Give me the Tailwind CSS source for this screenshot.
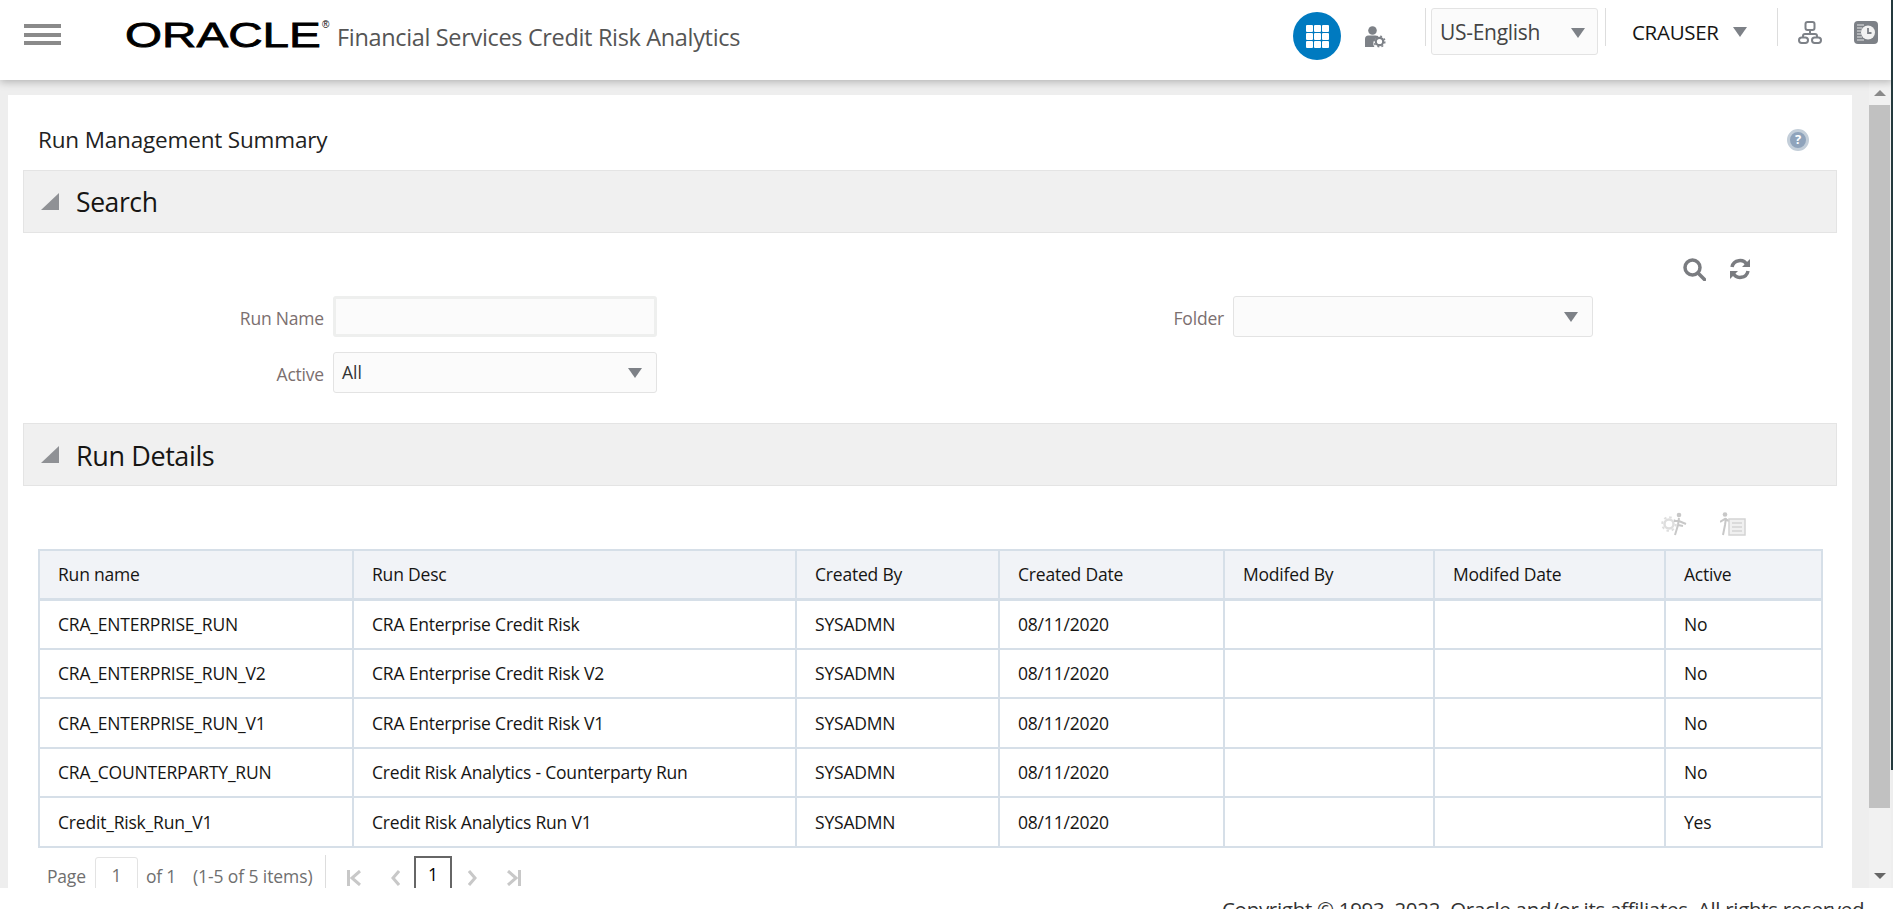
<!DOCTYPE html>
<html>
<head>
<meta charset="utf-8">
<title>Run Management Summary</title>
<script src="https://cdn.jsdelivr.net/npm/@tailwindcss/browser@4"></script>
</head>
<body class="relative h-[909px] overflow-hidden bg-white font-['Open_Sans',sans-serif] text-[#161513]">

<!-- top bar -->
<header class="relative z-10 flex h-20 items-center bg-white pb-2 pr-[2px] shadow-[0_2px_8px_rgba(0,0,0,0.25)]">
    <div class="mb-[3px] ml-6 flex w-[37px] flex-col gap-[4.500px]">
        <span class="h-1 bg-[#8a8a8a]"></span>
        <span class="h-1 bg-[#8a8a8a]"></span>
        <span class="h-1 bg-[#8a8a8a]"></span>
    </div>
    <div class="relative mb-[2px] ml-[64px] h-[30px] w-[207px]">
        <span class="inline-block origin-left scale-x-[1.36] font-['Liberation_Sans',sans-serif] text-[35px] leading-[30px] text-black [-webkit-text-stroke:0.8px_#000]">ORACLE</span>
        <span class="absolute left-[197px] top-[-1px] font-['Liberation_Sans',sans-serif] text-[10px] leading-[12px] text-black">®</span>
    </div>
    <span class="ml-[5px] mt-[4px] text-[23.500px] tracking-[-0.34px] text-[#555]">Financial Services Credit Risk Analytics</span>

    <div class="ml-auto flex h-[72px] items-center">
        <div class="flex size-12 items-center justify-center rounded-full bg-[#007ac0]">
            <div class="grid grid-cols-[repeat(3,7px)] gap-[1px]">
                <span class="size-[7px] rounded-[1px] bg-white"></span><span class="size-[7px] rounded-[1px] bg-white"></span><span class="size-[7px] rounded-[1px] bg-white"></span>
                <span class="size-[7px] rounded-[1px] bg-white"></span><span class="size-[7px] rounded-[1px] bg-white"></span><span class="size-[7px] rounded-[1px] bg-white"></span>
                <span class="size-[7px] rounded-[1px] bg-white"></span><span class="size-[7px] rounded-[1px] bg-white"></span><span class="size-[7px] rounded-[1px] bg-white"></span>
            </div>
        </div>
        <svg class="ml-[23px] mt-[2px] size-[22px]" viewBox="0 0 22 22" fill="#7d8187">
            <circle cx="8.500" cy="4.500" r="4.300"/>
            <path d="M1 21V13q0-3.500 3.500-3.500h7q3 0 3 2a6 6 0 0 0-4 9.500z"/>
            <circle cx="15.500" cy="15.500" r="3.700" fill="none" stroke="#7d8187" stroke-width="2.200"/>
            <circle cx="15.500" cy="15.500" r="5.400" fill="none" stroke="#7d8187" stroke-width="1.400" stroke-dasharray="2 2.240"/>
        </svg>
        <span class="ml-[39px] h-[38px] w-px self-start mt-2 bg-[#ddd]"></span>
        <div class="ml-[5px] mt-2 flex h-[47px] w-[167px] items-center justify-between self-start rounded-[3px] border border-[#e3e3e3] bg-[#fbfbfb] pl-[8px] pr-[12px] pt-[3px] text-[21px] tracking-[-0.3px] text-[#444]">
            US-English
            <span class="mb-[1px] size-0 border-x-[7px] border-t-[10px] border-x-transparent border-t-[#7d8187]"></span>
        </div>
        <span class="ml-[7px] h-[38px] w-px self-start mt-2 bg-[#ddd]"></span>
        <span class="mb-[8px] ml-[26px] w-[101px] text-[20.500px] tracking-[-0.3px]">CRAUSER</span>
        <span class="mb-[8px] size-0 border-x-[7px] border-t-[10px] border-x-transparent border-t-[#7d8187]"></span>
        <span class="ml-[30px] h-[38px] w-px self-start mt-2 bg-[#ddd]"></span>
        <svg class="mb-[7px] ml-[20px] h-[23px] w-[24px]" viewBox="0 0 24 23" fill="none" stroke="#7d8187" stroke-width="2">
            <rect x="7.500" y="1" width="9" height="8" rx="2"/>
            <path d="M12 9v4M5 17v-2q0-2 2-2h10q2 0 2 2v2"/>
            <rect x="1" y="16.500" width="9" height="5.500" rx="2.700"/>
            <rect x="14" y="16.500" width="9" height="5.500" rx="2.700"/>
        </svg>
        <svg class="mb-[7px] ml-[32px] h-[23px] w-[24px]" viewBox="0 0 24 23" fill="none">
            <rect x="0" y="0" width="24" height="23" rx="4" fill="#7d8187"/>
            <path d="M3 4h7M3 7h5M3 10h4M3 13h4M3 16h5M3 19h7" stroke="#e8e8e8" stroke-width="1"/>
            <circle cx="14" cy="11.500" r="7" fill="#f2f2f2"/>
            <path d="M14 7v5h3.500" stroke="#7d8187" stroke-width="1.800"/>
        </svg>
        <span class="w-[13px]"></span>
    </div>
</header>

<div class="flex h-[808px] items-start bg-[#eeeeee]">
    <!-- content panel -->
    <main class="ml-2 mt-[15px] h-[793px] w-[1844px] overflow-hidden bg-white px-[15px]">
        <div class="flex h-[75px] items-center justify-between pl-[15px] pr-[28px] pt-[14px]">
            <h1 class="text-[22.500px] tracking-[-0.17px] text-[#222]">Run Management Summary</h1>
            <span class="flex size-[22px] items-center justify-center rounded-full border-[3px] border-[#c3ced9] bg-[#8fa3bb] text-[13px] font-bold leading-none text-white">?</span>
        </div>

        <section class="flex h-[63px] items-center border border-[#e4e4e4] bg-[#f0f0f0]">
            <span class="ml-[17px] size-0 border-b-[17px] border-l-[18px] border-b-[#8f9195] border-l-transparent"></span>
            <h2 class="ml-[17px] pt-[2px] text-[26.500px] tracking-[-0.4px]">Search</h2>
        </section>

        <div class="flex h-[26px] justify-end gap-[23px] pr-[86px] pt-[25px]">
            <svg class="size-[23px] shrink-0" viewBox="0 0 23 23" fill="none" stroke="#7a7c80" stroke-width="3.500">
                <circle cx="9.500" cy="9.500" r="7.500"/>
                <path d="M15 15l6.500 6.500" stroke-linecap="round"/>
            </svg>
            <svg class="size-[22px] shrink-0" viewBox="0 0 22 22" fill="none" stroke="#7a7c80" stroke-width="3.500">
                <path d="M3 9a8 8 0 0 1 15-2"/>
                <path d="M19 13a8 8 0 0 1-15 2"/>
                <path d="M21 1v8h-8z" fill="#7a7c80" stroke="none"/>
                <path d="M1 21v-8h8z" fill="#7a7c80" stroke="none"/>
            </svg>
        </div>

        <div class="mt-[37px] grid grid-cols-[310px_324px_576px_360px] items-center gap-y-[15px] text-[17.500px]">
            <label class="pr-[9px] pt-1 text-right tracking-[-0.2px] text-[#7b6f6f]">Run Name</label>
            <input class="h-[41px] rounded-[3px] border-[3px] border-[#eeefee] bg-[#fbfbfb]">
            <label class="pr-[9px] pt-1 text-right tracking-[-0.2px] text-[#7b6f6f]">Folder</label>
            <div class="flex h-[41px] items-center justify-end rounded-[3px] border border-[#e3e3e3] bg-[#fbfbfb] pr-[14px]">
                <span class="size-0 border-x-[7px] border-t-[10px] border-x-transparent border-t-[#7d8187]"></span>
            </div>
            <label class="pr-[9px] pt-1 text-right tracking-[-0.2px] text-[#7b6f6f]">Active</label>
            <div class="flex h-[41px] items-center justify-between rounded-[3px] border border-[#e3e3e3] bg-[#fbfbfb] pl-2 pr-[14px] text-[#333]">
                All
                <span class="size-0 border-x-[7px] border-t-[10px] border-x-transparent border-t-[#7d8187]"></span>
            </div>
        </div>

        <section class="mt-[30px] flex h-[63px] items-center border border-[#e4e4e4] bg-[#f0f0f0]">
            <span class="ml-[17px] size-0 border-b-[17px] border-l-[18px] border-b-[#8f9195] border-l-transparent"></span>
            <h2 class="ml-[17px] pt-1 text-[27px] tracking-[-0.4px]">Run Details</h2>
        </section>

        <div class="flex h-[63px] items-start justify-end gap-[33px] pr-[91px] pt-[26px]">
            <svg class="h-[24px] w-[26px]" viewBox="0 0 26 24" fill="none">
                <circle cx="8" cy="12" r="4.500" stroke="#dedede" stroke-width="2.500"/>
                <circle cx="8" cy="12" r="6.800" stroke="#dedede" stroke-width="2" stroke-dasharray="2.500 2.840"/>
                <circle cx="18" cy="3" r="2.300" fill="#c8c8c8"/>
                <path d="M18 6l-1 7-3 10M13 9h5l7 3M17 13l5 1" stroke="#c8c8c8" stroke-width="2"/>
            </svg>
            <svg class="h-[24px] w-[26px]" viewBox="0 0 26 24" fill="none">
                <circle cx="5" cy="2.500" r="2.300" fill="#c8c8c8"/>
                <path d="M6 6L5 13l-2 10M0 10l5-3 4 2" stroke="#c8c8c8" stroke-width="2"/>
                <rect x="9" y="7" width="16" height="16" fill="#f0f0f0" stroke="#d4d4d4" stroke-width="1.500"/>
                <path d="M12 11h10M12 15h10M12 19h10" stroke="#d4d4d4" stroke-width="1.500"/>
            </svg>
        </div>

        <table class="ml-[15px] w-[1783px] table-fixed border-collapse border-2 border-[#d6dfe8] text-[17.500px] tracking-[-0.2px] text-[#161513]">
            <colgroup>
                <col class="w-[314px]"><col class="w-[443px]"><col class="w-[203px]"><col class="w-[225px]"><col class="w-[210px]"><col class="w-[231px]"><col class="w-[157px]">
            </colgroup>
            <thead>
                <tr class="h-[49px] bg-[#f1f3f7] text-left">
                    <th class="border-r-2 border-b-[3px] border-[#d6dfe8] pl-[18px] font-normal">Run name</th>
                    <th class="border-r-2 border-b-[3px] border-[#d6dfe8] pl-[18px] font-normal">Run Desc</th>
                    <th class="border-r-2 border-b-[3px] border-[#d6dfe8] pl-[18px] font-normal">Created By</th>
                    <th class="border-r-2 border-b-[3px] border-[#d6dfe8] pl-[18px] font-normal">Created Date</th>
                    <th class="border-r-2 border-b-[3px] border-[#d6dfe8] pl-[18px] font-normal">Modifed By</th>
                    <th class="border-r-2 border-b-[3px] border-[#d6dfe8] pl-[18px] font-normal">Modifed Date</th>
                    <th class="border-b-[3px] border-[#d6dfe8] pl-[18px] font-normal">Active</th>
                </tr>
            </thead>
            <tbody>
                <tr class="h-[49.500px] border-b-2 border-[#d6dfe8]">
                    <td class="border-r-2 border-[#d6dfe8] pl-[18px]">CRA_ENTERPRISE_RUN</td><td class="border-r-2 border-[#d6dfe8] pl-[18px]">CRA Enterprise Credit Risk</td><td class="border-r-2 border-[#d6dfe8] pl-[18px]">SYSADMN</td><td class="border-r-2 border-[#d6dfe8] pl-[18px]">08/11/2020</td><td class="border-r-2 border-[#d6dfe8]"></td><td class="border-r-2 border-[#d6dfe8]"></td><td class="pl-[18px]">No</td>
                </tr>
                <tr class="h-[49.500px] border-b-2 border-[#d6dfe8]">
                    <td class="border-r-2 border-[#d6dfe8] pl-[18px]">CRA_ENTERPRISE_RUN_V2</td><td class="border-r-2 border-[#d6dfe8] pl-[18px]">CRA Enterprise Credit Risk V2</td><td class="border-r-2 border-[#d6dfe8] pl-[18px]">SYSADMN</td><td class="border-r-2 border-[#d6dfe8] pl-[18px]">08/11/2020</td><td class="border-r-2 border-[#d6dfe8]"></td><td class="border-r-2 border-[#d6dfe8]"></td><td class="pl-[18px]">No</td>
                </tr>
                <tr class="h-[49.500px] border-b-2 border-[#d6dfe8]">
                    <td class="border-r-2 border-[#d6dfe8] pl-[18px]">CRA_ENTERPRISE_RUN_V1</td><td class="border-r-2 border-[#d6dfe8] pl-[18px]">CRA Enterprise Credit Risk V1</td><td class="border-r-2 border-[#d6dfe8] pl-[18px]">SYSADMN</td><td class="border-r-2 border-[#d6dfe8] pl-[18px]">08/11/2020</td><td class="border-r-2 border-[#d6dfe8]"></td><td class="border-r-2 border-[#d6dfe8]"></td><td class="pl-[18px]">No</td>
                </tr>
                <tr class="h-[49.500px] border-b-2 border-[#d6dfe8]">
                    <td class="border-r-2 border-[#d6dfe8] pl-[18px]">CRA_COUNTERPARTY_RUN</td><td class="border-r-2 border-[#d6dfe8] pl-[18px]">Credit Risk Analytics - Counterparty Run</td><td class="border-r-2 border-[#d6dfe8] pl-[18px]">SYSADMN</td><td class="border-r-2 border-[#d6dfe8] pl-[18px]">08/11/2020</td><td class="border-r-2 border-[#d6dfe8]"></td><td class="border-r-2 border-[#d6dfe8]"></td><td class="pl-[18px]">No</td>
                </tr>
                <tr class="h-[49.500px]">
                    <td class="border-r-2 border-[#d6dfe8] pl-[18px]">Credit_Risk_Run_V1</td><td class="border-r-2 border-[#d6dfe8] pl-[18px]">Credit Risk Analytics Run V1</td><td class="border-r-2 border-[#d6dfe8] pl-[18px]">SYSADMN</td><td class="border-r-2 border-[#d6dfe8] pl-[18px]">08/11/2020</td><td class="border-r-2 border-[#d6dfe8]"></td><td class="border-r-2 border-[#d6dfe8]"></td><td class="pl-[18px]">Yes</td>
                </tr>
            </tbody>
        </table>

        <!-- pager, cut off by the panel -->
        <div class="ml-[24px] mt-[9px] flex h-[40px] items-start text-[17.500px] tracking-[-0.2px] text-[#6f6f6f]">
            <span class="mt-[6px] w-[48px]">Page</span>
            <span class="flex h-[40px] w-[43px] items-center justify-center rounded-[3px] border border-[#e3e3e3] pb-[2px]">1</span>
            <span class="ml-2 mt-[6px] w-[47px] shrink-0">of 1</span>
            <span class="mt-[6px] w-[132px] shrink-0 tracking-[-0.1px]">(1-5 of 5 items)</span>
            <span class="mt-[-2px] h-[42px] w-px bg-[#ddd]"></span>
            <svg class="ml-[21px] mt-[13px] h-[16px] w-[14px]" viewBox="0 0 14 16" fill="none" stroke="#c8c8c8" stroke-width="3">
                <path d="M1.500 0v16M13 1L5 8l8 7"/>
            </svg>
            <svg class="ml-[30px] mt-[13px] h-[16px] w-[9px]" viewBox="0 0 9 16" fill="none" stroke="#c8c8c8" stroke-width="3">
                <path d="M8 1L2 8l6 7"/>
            </svg>
            <span class="ml-[14px] -mt-px flex h-[40px] w-[38px] items-center justify-center border-2 border-[#666] pb-[2px] text-black">1</span>
            <svg class="ml-[16px] mt-[13px] h-[16px] w-[9px]" viewBox="0 0 9 16" fill="none" stroke="#c8c8c8" stroke-width="3">
                <path d="M1 1l6 7-6 7"/>
            </svg>
            <svg class="ml-[30px] mt-[13px] h-[16px] w-[14px]" viewBox="0 0 14 16" fill="none" stroke="#c8c8c8" stroke-width="3">
                <path d="M1 1l8 7-8 7M12.500 0v16"/>
            </svg>
        </div>
    </main>
    <!-- scrollbar -->
    <div class="ml-[17px] flex h-[808px] w-[22px] flex-col items-center bg-[#f1f1f1] pt-[10px]">
        <span class="size-0 border-x-[6px] border-b-[6px] border-x-transparent border-b-[#8a8a8a]"></span>
        <div class="mt-[9px] h-[703px] w-[21px] self-start bg-[#c1c1c1]"></div>
        <span class="mt-[65px] size-0 border-x-[6px] border-t-[6px] border-x-transparent border-t-[#666]"></span>
    </div>
</div>

<footer class="mt-[6px] pl-[1222px] text-[20.500px] tracking-[-0.3px] whitespace-nowrap text-[#333]">Copyright © 1993, 2022, Oracle and/or its affiliates. All rights reserved.</footer>

<!-- dark window edge on the far right -->
<div class="absolute right-0 top-0 z-20 h-[770px] w-[2px] bg-[#24393d]"></div>
</body>
</html>
